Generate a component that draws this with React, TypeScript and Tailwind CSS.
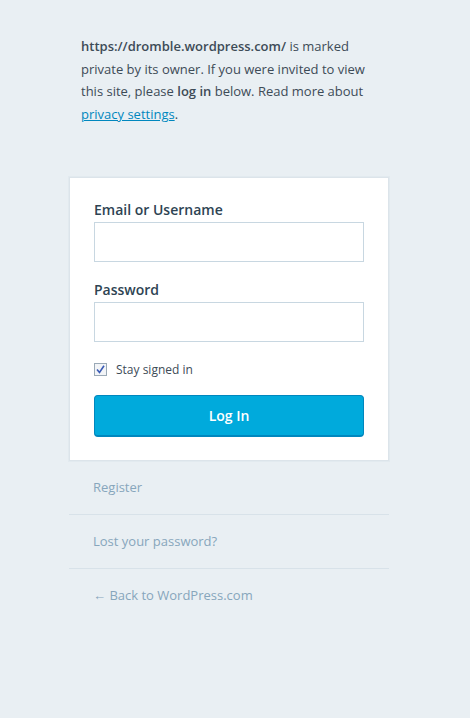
import React from "react";

export default function App() {
  return (
    <div
      className="min-h-[718px] w-full bg-[#e9eff3] text-[#2e4453]"
      style={{ fontFamily: '"Open Sans", "Noto Sans", sans-serif' }}
    >
      <div className="ml-[69px] w-[320px] pt-[35px]">
        <p className="px-3 text-[13px] leading-[22.6px] text-[#3d4b57]">
          <strong className="font-semibold">https://dromble.wordpress.com/</strong> is marked private by its owner. If you were invited to view this site, please{" "}
          <strong className="font-semibold">log in</strong> below. Read more about{" "}
          <a href="#" className="text-[#0087be] underline">privacy settings</a>.
        </p>

        <div className="mt-[52px] border border-[#dce4ea] bg-white px-6 pb-[23px] pt-[21px] shadow-[0_0_0_1px_rgba(200,215,225,0.2)]">
          <label className="block text-[14px] font-semibold leading-[21px] text-[#2e4453]">Email or Username</label>
          <div className="mt-[2px] h-[40px] w-full border border-[#c8d7e1] bg-white" />
          <label className="mt-[17px] block text-[14px] font-semibold leading-[21px] text-[#2e4453]">Password</label>
          <div className="mt-[2px] h-[40px] w-full border border-[#c8d7e1] bg-white" />
          <div className="mt-[19px] flex items-center gap-[9px]">
            <span className="flex h-[13px] w-[13px] items-center justify-center border border-[#9aa9b6] bg-[#f2f4f7]">
              <svg width="9" height="9" viewBox="0 0 9 9">
                <path d="M1 4.5 L3.5 7.5 L8 0.8" fill="none" stroke="#3b5bb5" strokeWidth="1.6" />
              </svg>
            </span>
            <span className="text-[12px] leading-[17px] text-[#3d4b57]">Stay signed in</span>
          </div>
          <button className="mt-[17px] flex h-[42px] w-full items-center justify-center rounded-[4px] border border-[#0087be] border-b-2 bg-[#00aadc] text-[14px] font-semibold text-white">
            Log In
          </button>
        </div>

        <div className="text-[13px] text-[#87a6bc]">
          <div className="border-b border-[#d8e2e9] px-6 py-[16px] leading-[21px]">Register</div>
          <div className="border-b border-[#d8e2e9] px-6 py-[16px] leading-[21px]">Lost your password?</div>
          <div className="px-6 py-[16px] leading-[21px]">← Back to WordPress.com</div>
        </div>
      </div>
    </div>
  );
}
